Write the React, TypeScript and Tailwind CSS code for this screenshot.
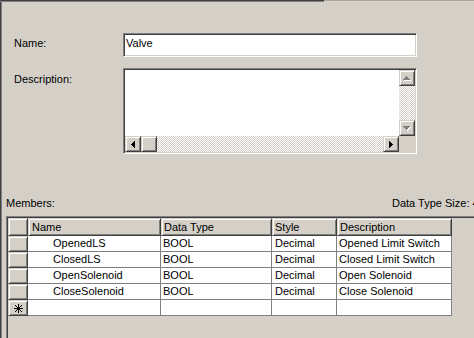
import React from "react";

const RAISED =
  "box-border border border-[#d4d0c8] border-r-[#404040] border-b-[#404040] shadow-[inset_1px_1px_#ffffff,inset_-1px_-1px_#808080] bg-[#d4d0c8]";
const SUNKEN =
  "box-border border border-[#808080] border-r-white border-b-white shadow-[inset_1px_1px_#404040,inset_-1px_-1px_#d4d0c8]";
const CHECKER =
  "bg-[image:repeating-conic-gradient(#ffffff_0_25%,#d4d0c8_0_50%)] bg-[length:2px_2px]";

function ArrowUp({ disabled }: { disabled?: boolean }) {
  const rows = [
    [3, 1],
    [2, 3],
    [1, 5],
    [0, 7],
  ];
  return (
    <svg width="8" height="5" viewBox="0 0 8 5" shapeRendering="crispEdges">
      {disabled &&
        rows.map(([x, w], i) => (
          <rect key={"s" + i} x={x + 1} y={i + 1} width={w} height={1} fill="#ffffff" />
        ))}
      {rows.map(([x, w], i) => (
        <rect key={i} x={x} y={i} width={w} height={1} fill={disabled ? "#808080" : "#000"} />
      ))}
    </svg>
  );
}

function ArrowDown({ disabled }: { disabled?: boolean }) {
  const rows = [
    [0, 7],
    [1, 5],
    [2, 3],
    [3, 1],
  ];
  return (
    <svg width="8" height="5" viewBox="0 0 8 5" shapeRendering="crispEdges">
      {disabled &&
        rows.map(([x, w], i) => (
          <rect key={"s" + i} x={x + 1} y={i + 1} width={w} height={1} fill="#ffffff" />
        ))}
      {rows.map(([x, w], i) => (
        <rect key={i} x={x} y={i} width={w} height={1} fill={disabled ? "#808080" : "#000"} />
      ))}
    </svg>
  );
}

function ArrowLeft() {
  const cols = [
    [3, 1],
    [2, 3],
    [1, 5],
    [0, 7],
  ];
  return (
    <svg width="4" height="7" viewBox="0 0 4 7" shapeRendering="crispEdges">
      {cols.map(([y, h], i) => (
        <rect key={i} x={i} y={y} width={1} height={h} fill="#000" />
      ))}
    </svg>
  );
}

function ArrowRight() {
  const cols = [
    [0, 7],
    [1, 5],
    [2, 3],
    [3, 1],
  ];
  return (
    <svg width="4" height="7" viewBox="0 0 4 7" shapeRendering="crispEdges">
      {cols.map(([y, h], i) => (
        <rect key={i} x={i} y={y} width={1} height={h} fill="#000" />
      ))}
    </svg>
  );
}

function Asterisk() {
  return (
    <svg width="9" height="9" viewBox="0 0 9 9" shapeRendering="crispEdges">
      <rect x="4" y="0" width="1" height="9" fill="#000" />
      <rect x="0" y="4" width="9" height="1" fill="#000" />
      <rect x="1" y="1" width="1" height="1" fill="#000" />
      <rect x="2" y="2" width="1" height="1" fill="#000" />
      <rect x="3" y="3" width="3" height="3" fill="#000" />
      <rect x="6" y="6" width="1" height="1" fill="#000" />
      <rect x="7" y="7" width="1" height="1" fill="#000" />
      <rect x="7" y="1" width="1" height="1" fill="#000" />
      <rect x="6" y="2" width="1" height="1" fill="#000" />
      <rect x="2" y="6" width="1" height="1" fill="#000" />
      <rect x="1" y="7" width="1" height="1" fill="#000" />
    </svg>
  );
}

const rows = [
  ["OpenedLS", "BOOL", "Decimal", "Opened Limit Switch"],
  ["ClosedLS", "BOOL", "Decimal", "Closed Limit Switch"],
  ["OpenSolenoid", "BOOL", "Decimal", "Open Solenoid"],
  ["CloseSolenoid", "BOOL", "Decimal", "Close Solenoid"],
];

export default function App() {
  return (
    <div className="w-[474px] h-[338px] overflow-hidden bg-[#d4d0c8] flex flex-col font-['Liberation_Sans',Arial,sans-serif] text-[11px] leading-[13px] text-black">
      <div className="flex h-[2px] shrink-0">
        <div className="w-[324px] h-[2px] box-border border-t border-t-[#404040] border-b border-b-[#808080]" />
        <div className="flex-1 h-[2px] box-border border-t border-t-[#a9a59d]" />
      </div>
      <div className="flex-1 flex border-l border-[#404040] min-h-0">
        <div className="flex-1 flex flex-col border-l border-[#808080] min-w-0">
          {/* Name row */}
          <div className="flex mt-[31px] shrink-0">
            <div className="w-[121px] shrink-0 pl-[12px] pt-[4px]">Name:</div>
            <div className={`${SUNKEN} w-[294px] shrink-0 h-[24px] bg-white pl-[2px] pt-[3px]`}>Valve</div>
          </div>
          {/* Description row */}
          <div className="flex mt-[11px] shrink-0">
            <div className="w-[121px] shrink-0 pl-[12px] pt-[5px]">Description:</div>
            <div className={`${SUNKEN} w-[294px] shrink-0 h-[86px] bg-white p-[1px] flex flex-col`}>
              <div className="flex flex-1 min-h-0">
                <div className="flex-1 bg-white" />
                <div className="w-[16px] flex flex-col">
                  <div className={`${RAISED} h-[16px] flex items-center justify-center`}>
                    <ArrowUp disabled />
                  </div>
                  <div className={`flex-1 ${CHECKER}`} />
                  <div className={`${RAISED} h-[16px] flex items-center justify-center`}>
                    <ArrowDown disabled />
                  </div>
                </div>
              </div>
              <div className="flex h-[16px] shrink-0">
                <div className={`${RAISED} w-[16px] h-[16px] flex items-center justify-center`}>
                  <ArrowLeft />
                </div>
                <div className={`${RAISED} w-[16px] h-[16px]`} />
                <div className={`flex-1 ${CHECKER}`} />
                <div className={`${RAISED} w-[16px] h-[16px] flex items-center justify-center`}>
                  <ArrowRight />
                </div>
                <div className="w-[16px] h-[16px] bg-[#d4d0c8]" />
              </div>
            </div>
          </div>
          {/* Members row */}
          <div className="flex mt-[43px] shrink-0">
            <div className="w-[390px] shrink-0 pl-[4px]">Members:</div>
            <div className="shrink-0 whitespace-nowrap">Data Type Size: 4</div>
          </div>
          {/* Grid */}
          <div className="flex-1 mt-[6px] ml-[4px] border-t border-l border-[#808080] flex flex-col min-h-0">
            <div className="flex-1 border-t border-l border-[#404040]">
              <div className="grid grid-cols-[20px_133px_111px_65px_115px] w-[444px]">
                <div className={`${RAISED} h-[18px]`} />
                <div className={`${RAISED} h-[18px] pl-[3px] pt-[2px]`}>Name</div>
                <div className={`${RAISED} h-[18px] pl-[2px] pt-[2px]`}>Data Type</div>
                <div className={`${RAISED} h-[18px] pl-[2px] pt-[2px]`}>Style</div>
                <div className={`${RAISED} h-[18px] pl-[2px] pt-[2px]`}>Description</div>
                {rows.map((r, i) => (
                  <React.Fragment key={i}>
                    <div className={`${RAISED} h-[16px]`} />
                    <div className="h-[16px] box-border bg-white border-r border-b border-[#808080] pl-[25px] pt-[1px] whitespace-nowrap">
                      {r[0]}
                    </div>
                    <div className="h-[16px] box-border bg-white border-r border-b border-[#808080] pl-[2px] pt-[1px] whitespace-nowrap">
                      {r[1]}
                    </div>
                    <div className="h-[16px] box-border bg-white border-r border-b border-[#808080] pl-[3px] pt-[1px] whitespace-nowrap">
                      {r[2]}
                    </div>
                    <div className="h-[16px] box-border bg-white border-r border-b border-[#808080] pl-[2px] pt-[1px] whitespace-nowrap">
                      {r[3]}
                    </div>
                  </React.Fragment>
                ))}
                <div className={`${RAISED} h-[16px] flex items-center justify-center`}>
                  <Asterisk />
                </div>
                <div className="h-[16px] box-border bg-white border-r border-b border-[#808080]" />
                <div className="h-[16px] box-border bg-white border-r border-b border-[#808080]" />
                <div className="h-[16px] box-border bg-white border-r border-b border-[#808080]" />
                <div className="h-[16px] box-border bg-white border-r border-b border-[#808080]" />
              </div>
            </div>
          </div>
        </div>
      </div>
    </div>
  );
}
